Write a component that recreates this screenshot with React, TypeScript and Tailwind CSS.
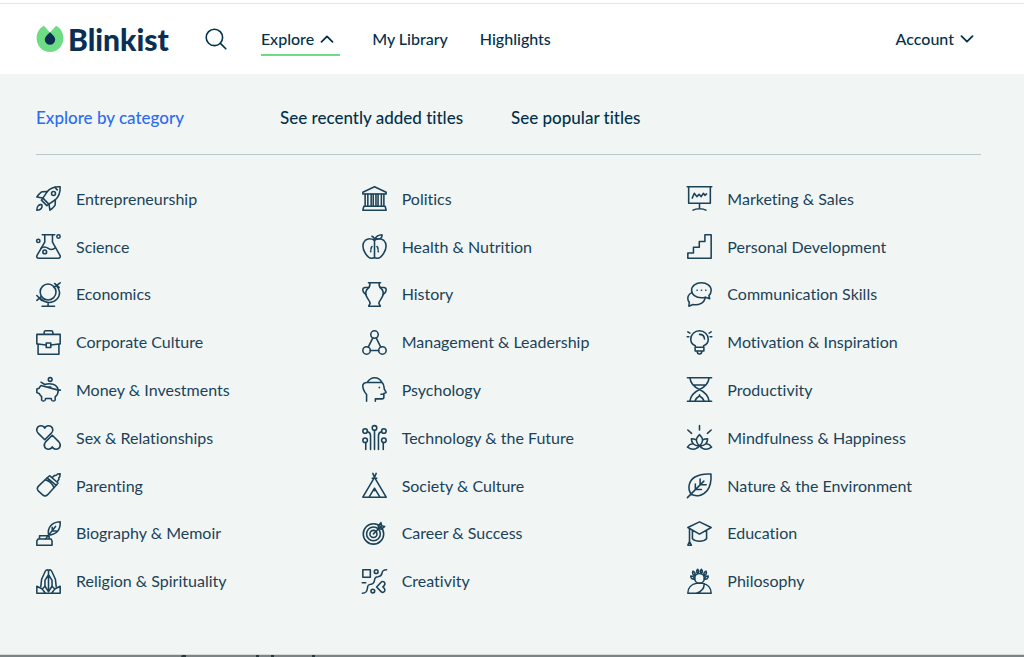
import React from "react";

interface Category {
  label: string;
  icon: React.ReactNode;
}

// Icons share a 24px box and inherit stroke settings from <CategoryIcon />
const categories: Category[] = [
  {
    label: "Entrepreneurship",
    icon: (
      <>
        <path d="M23.2.8C18 .6 14 1.8 10.8 5.4L6.6 11.6l5.8 5.8 6.2-4.2C22.2 10 23.4 6 23.2.8Z" />
        <circle cx="16.8" cy="7.2" r="1.9" />
        <path d="M10.8 5.4 6 5.6C4 6.2 2.4 8.4.8 10.6l5.8 1M18.6 13.2l-.2 4.8c-.6 2-2.8 3.6-5 5.2l-1-5.8" />
        <path d="m6.6 11.6-1.4 2 5.2 5.2 2-1.4M18 1.200c1 .4 1.200 1.600 2.400 2.600" />
        <path d="M5.600 18C3 17.400.6 19.600.8 23.200 4.400 23.400 6.600 20.800 5.600 18Z" />
      </>
    ),
  },
  {
    label: "Politics",
    icon: (
      <>
        <path d="M12 .8 23.200 6v1.600H.8V6ZM1.800 19.400h20.400l1 3.800H.8Z" />
        <path d="M3 7.600v11.800M5.600 7.600v11.800M8.800 7.600v11.800M10.800 7.600v11.800M13.400 7.600v11.800M15.400 7.600v11.800M18.600 7.600v11.800M21 7.600v11.800" />
      </>
    ),
  },
  {
    label: "Marketing & Sales",
    icon: (
      <>
        <path d="M.2.800h23.600M1.600.800v15.800h20.800V.800M12 16.600v5.200M5.800 23.200c1.600-1 3.800-1.400 6.200-1.400s4.600.4 6.200 1.400" />
        <path d="M5 11.600 7 7l2.400 3.200 2.200-2.200 2 2.200L15.800 7l1.400 2 1.600-1.400" />
      </>
    ),
  },
  {
    label: "Science",
    icon: (
      <>
        <path d="M6 .800h12M8.400.800v7L1 20.600c-.8 1.400 0 2.600 1.600 2.600h18.800c1.600 0 2.400-1.200 1.600-2.600L15.800 7.800v-7" />
        <path d="M4.800 13.800c2.400-2.200 4.600-1.600 7 0s4.800 1.200 6.800-.6" />
        <circle cx="2.200" cy="6.600" r="1.600" />
        <circle cx="21.600" cy="2.400" r="1.600" />
        <circle cx="8.400" cy="17.200" r="1.800" />
      </>
    ),
  },
  {
    label: "Health & Nutrition",
    icon: (
      <>
        <path d="M12 6C9 4.200 5.400 4.200 3 6.200c-3 2.800-2.600 8 0 12C5 21.800 7.400 23.600 10 23.200c.8-.2 1.200-.4 2-.4s1.200.2 2 .4c2.600.4 5-1.400 7-5 2.600-4 3-9.200 0-12-2.400-2-6-2-9-.2Z" />
        <path d="M9.600 2.200C11 2.800 12 4 12 6v16.800M12.800 4.400c1-2.600 3.400-3.400 6.400-3.600.4 2.800-2 5-6.400 3.600ZM9.600 12c-.8.800-1 1.600-1 2.600M8.400 16.200v.8M14.400 12c.8.800 1 1.600 1 2.600M15.600 16.200v.8" />
      </>
    ),
  },
  {
    label: "Personal Development",
    icon: <path d="M.800 23.200v-5h5.400v-5.400h5.600V7.200h5.400V.800h6v22.400Z" />,
  },
  {
    label: "Economics",
    icon: (
      <>
        <circle cx="11.600" cy="9.600" r="7.600" />
        <path d="M19.400 3.200c4 4 4.400 9.600.6 13.400-4 4-10.600 4.200-15.400-.4M23.200.800l-6 4.400M17.800 1.400l4.400 3.800M.800 13l4.600 4.600M5.200 13.800.800 17.600M11.600 19.600v3.600M5.800 23.200h12" />
      </>
    ),
  },
  {
    label: "History",
    icon: (
      <>
        <path d="M6.200.800h11.600M7.600.800c0 3 .2 4.200-2 5.600-1.800 1.600-2.400 4-1.600 6.600.8 3 3.800 5 3.800 7.600L6.400 23.200h11.200l-1.400-2.600c0-2.600 3-4.600 3.800-7.600.8-2.600.2-5-1.600-6.600-2.200-1.400-2-2.600-2-5.600" />
        <path d="M6.600 5.200H3.200C1.400 5.200.600 6.600.800 8c.2 1.800 1.400 3.200 3.200 4.200M17.400 5.200h3.400c1.800 0 2.600 1.400 2.400 2.800-.2 1.800-1.400 3.200-3.200 4.200" />
      </>
    ),
  },
  {
    label: "Communication Skills",
    icon: (
      <>
        <path d="M13.800.800c5.200 0 9.400 3 9.400 7.200 0 2.200-.8 3.800-2.200 5l.8 3-4.200-1.400c-1.200.4-2.400.6-3.800.6-5.200 0-9.400-3-9.400-7.200S8.600.800 13.800.800Z" />
        <path d="M4.600 10.200C2 11.600.600 13.600.800 16c0 1.400.6 2.400 1.400 3.400l-.4 3.800 4-1.600c5 1 10.800-1 11.600-6.600" />
        <path d="M9.600 8h.2M13.800 8h.2M18 8h.2" />
      </>
    ),
  },
  {
    label: "Corporate Culture",
    icon: (
      <>
        <path d="M7.800 4.200V2.400C7.800 1.400 8.400.800 9.400.800h5.200c1 0 1.600.600 1.600 1.600v1.800M.800 4.200h22.400v9.200H22v9.800H2v-9.800H.800ZM2 13.400l7.600 1M22 13.400l-7.600 1" />
        <rect x="9.800" y="12.400" width="4.400" height="4.400" />
      </>
    ),
  },
  {
    label: "Management & Leadership",
    icon: (
      <>
        <circle cx="12" cy="4.400" r="3.600" />
        <circle cx="4.400" cy="19.600" r="3.600" />
        <circle cx="19.600" cy="19.600" r="3.600" />
        <path d="M10.400 7.600 6 16.400M13.600 7.600l4.400 8.800M8 19.600h8" />
      </>
    ),
  },
  {
    label: "Motivation & Inspiration",
    icon: (
      <>
        <path d="M8 16.600v-1.400C5.400 14 3.600 11.600 3.600 8.800 3.600 4.400 7.400.800 12 .800s8.400 3.600 8.400 8c0 2.800-1.800 5.200-4.400 6.400v1.400ZM7.800 16.600h8.400v3.600H7.800ZM9.800 20.400c0 3.600 4.400 3.600 4.400 0" />
        <path d="M12 4.200c2.600 0 4.600 1.800 4.800 4.400M.800 1.800 2.800 3M23.200 1.800 21.200 3M.200 6.400h1.600M23.800 6.400h-1.600" />
      </>
    ),
  },
  {
    label: "Money & Investments",
    icon: (
      <>
        <circle cx="13.600" cy="2.400" r="1.800" />
        <path d="m4.800 5 3.600 2.200c4.600-1.600 12-.8 13 5.400h2M21.400 12.600c0 2.600-1 4.800-3 6.400v3.200c-.4 1.200-3 1.200-3.400 0l-.4-1.600H9.200l-.4 1.600c-.4 1.200-3 1.200-3.400 0v-3.400c-1.200-.8-1.800-1.800-2.400-3L.800 15v-3.400l2.200-.8c.4-1 1-2 1.800-2.600ZM10.400 9.600h3.800" />
      </>
    ),
  },
  {
    label: "Psychology",
    icon: (
      <path d="M4.400 23.200v-6.400C2 14 .400 10.600.800 7.600 1.400 6 2.800 5.200 4.400 5.200h14.800c2.200 1.800 2 4.600 2.200 6.400l1.800 3.200-2.200 1v3.400c0 1.200-.6 1.800-1.800 1.800h-6.400v2.200M5 5C7.200 2 9 .800 12 .800S17.400 2 19 5M18.200 16.600h2.600M16.600 9.800v.4" />
    ),
  },
  {
    label: "Productivity",
    icon: (
      <path d="M.4.800h23.200M.4 23.200h23.200M2.800.800c.6 5.600 3.800 8.600 9.200 11.200 5.400-2.600 8.600-5.600 9.200-11.200M2.800 23.200C3.400 17.600 6.600 14.600 12 12c5.400 2.600 8.600 5.600 9.200 11.200M6 7.600h12M12 17v1M7.600 23c.8-2.400 2.400-3.600 4.400-5 2 1.400 3.600 2.600 4.400 5" />
    ),
  },
  {
    label: "Sex & Relationships",
    icon: (
      <>
        <path d="M8.400 14.200 2 7.800C-.8 4.400 1.400.800 4.800.800c1.600 0 3 .8 3.600 2.200.6-1.400 2-2.200 3.600-2.200 3.400 0 5.600 3.600 2.800 7Z" />
        <path d="M15.600 9.800 22 16.200c2.800 3.400.6 7-2.800 7-1.600 0-3-.8-3.600-2.200-.6 1.400-2 2.200-3.600 2.200-3.400 0-5.600-3.600-2.800-7Z" />
      </>
    ),
  },
  {
    label: "Technology & the Future",
    icon: (
      <>
        <circle cx="12" cy="2.800" r="2.200" />
        <circle cx="3" cy="5.800" r="2.200" />
        <circle cx="21" cy="5.800" r="2.200" />
        <circle cx="3" cy="14.600" r="2.200" />
        <circle cx="21" cy="14.600" r="2.200" />
        <path d="M12 5v18.600M3.600 16.800v6.800M20.400 16.800v6.800M5.200 6.400c2 .4 3 1.600 3 4v13.200M18.800 6.400c-2 .4-3 1.600-3 4v13.200" />
      </>
    ),
  },
  {
    label: "Mindfulness & Happiness",
    icon: (
      <>
        <path d="M12 .400v4.400M.800 4.800 4.400 8M23.200 4.800 19.600 8M12 9.200c-4 3.600-4 7.200 0 10.800 4-3.600 4-7.200 0-10.800ZM8.800 14.200c-1.600-.8-2.800-1-4.600-1 0 4.200 2.600 7 7.800 6.800 5.200.2 7.800-2.600 7.800-6.800-1.800 0-3 .2-4.600 1" />
        <path d="M5.400 18C3.200 18.200 1.600 19.400.400 21.200c4 2.800 8.400 2.600 11.600-1.200 3.200 3.800 7.600 4 11.600 1.200-1.200-1.800-2.800-3-5-3.200" />
      </>
    ),
  },
  {
    label: "Parenting",
    icon: (
      <>
        <path d="M10.800 4.600 2.400 12.600C1 14.200 1 16 2.400 17.400l4 3.600c1.600 1.400 3.400 1.200 4.800-.2l8.200-9" />
        <path d="m13 2.600 8.200 7-1.800 2.200-8.600-7.200ZM9 6.600c3 .4 7 3.800 8.200 7.400M15.200 4.400 18 2.200c1.200.4 2-.2 2.600-1.200l2.600-.2-.4 2.800c-1 .6-1.200 1.400-.8 2.400l-1.800 2.600" />
      </>
    ),
  },
  {
    label: "Society & Culture",
    icon: (
      <path d="M10.400.400 12 4.200l1.600-3.800M12 4.200.800 23.200h22.400ZM9.800 5h4.400M6.800 23.200 12 14.600l5.200 8.600M12 14.600v2.400" />
    ),
  },
  {
    label: "Nature & the Environment",
    icon: (
      <path d="M.4 23.600 16.200 7.800M3.800 20.200C.200 14.600 1.800 7.200 7.600 3.800 12 1.400 18.200.600 23 1c.4 5.400-.4 11.600-3.600 15.800-3.800 5-10.600 6.400-15.600 3.400ZM12.600 5.800v5.400h5.800M8 10.600v5.200h5.800" />
    ),
  },
  {
    label: "Biography & Memoir",
    icon: (
      <path d="M2 17.200h12.400l1 2v4H.800v-4ZM3.400 17.200v-3h9.200v3M9 17.400 18.800 5.200M12 13.600C10.800 6 15 1.200 23.200.800 23.600 8 20 12.800 12 13.600ZM15.600 6v3.600h4" />
    ),
  },
  {
    label: "Career & Success",
    icon: (
      <>
        <circle cx="11" cy="12.400" r="9.800" />
        <circle cx="11" cy="12.400" r="6.600" />
        <circle cx="11" cy="12.400" r="3.400" />
        <path d="m11 12.400 7.600-7.600M15.600 4.600l2.600-3 .6 3 3 .6-3 2.600-3-.4Z" />
      </>
    ),
  },
  {
    label: "Education",
    icon: (
      <path d="M12 .800 23.200 6.200 12 12.600.800 6.200ZM5.200 9v8c3 3.200 10.600 3.200 13.600 0V9M2.400 7.200v12.600M2.400 19.800.800 23.200h3.400Z" />
    ),
  },
  {
    label: "Religion & Spirituality",
    icon: (
      <>
        <path d="M12 1.400C10.600.400 9.600.800 8.800 2.400L5.400 9.800 4.600 17M12 1.400c1.400-1 2.400-.6 3.200 1l3.400 7.400.8 7.200M12 1.400V21M12 5.400 8.600 11v5.600M12 5.400l3.400 5.600v5.600" />
        <path d="M.800 16.600v6.600h22.400v-6.600L18 19.200l-2.600-2.600-3.400 5-3.400-5L6 19.200ZM6 19.200l3 4M18 19.200l-3 4" />
      </>
    ),
  },
  {
    label: "Creativity",
    icon: (
      <>
        <rect x=".8" y=".8" width="7.200" height="7.200" />
        <circle cx="13.600" cy="2.600" r="1.800" />
        <circle cx="10.400" cy="21.200" r="1.800" />
        <path d="M23.600.800c-3.600 0-4 1.200-4.400 3.200-.4 2.400-1.200 3.200-3.800 3.400-2.600 0-3.200 1.200-3.400 3.400-.4 2.800-1.200 3.600-3.400 3.800-2.600.2-3.200 1-3.400 3.800-.4 3.200-1.200 4.800-4.800 4.800M.200 13.200H3.600" />
        <path d="m14 17.200 4.800-5c1.600-.8 3.400.8 3.200 2.200-.2 1.200-1 2-2 2.800 1 .8 1.800 1.600 2 2.800.2 1.600-1.600 3-3.200 2.200Z" />
      </>
    ),
  },
  {
    label: "Philosophy",
    icon: (
      <>
        <circle cx="12" cy="9" r="4.600" />
        <path d="M.800 23.200c0-5.200 3.600-8.800 8.400-9.600h5.600c4.800.8 8.400 4.400 8.400 9.600ZM16.600 14.200c-.2 4.800-3 8-7.800 9" />
        <path d="M7.400 9.800C5 10.200 3.600 9 3.600 6.800c2 0 3.400 1 3.800 3ZM7.600 6.400C5.400 5.600 4.800 3.800 5.800 2c1.800 1 2.400 2.600 1.800 4.400ZM10.200 4.400C8.800 3 9 1.400 10.200.400c1.200 1.200 1.200 2.600 0 4ZM13.800 4.400c-1.200-1.400-1.200-2.800 0-4 1.200 1 1.400 2.600 0 4ZM16.400 6.400c-.6-1.800 0-3.400 1.800-4.400 1 1.800.4 3.600-1.800 4.400ZM16.600 9.800c.4-2 1.800-3 3.800-3 0 2.200-1.400 3.400-3.800 3Z" />
      </>
    ),
  },
];

const CategoryIcon: React.FC<{ children: React.ReactNode }> = ({ children }) => (
  <svg
    viewBox="0 0 24 24"
    className="size-[25px] shrink-0 overflow-visible"
    fill="none"
    stroke="currentColor"
    strokeWidth="1.5"
    strokeLinecap="round"
    strokeLinejoin="round"
    aria-hidden="true"
  >
    {children}
  </svg>
);

const Chevron: React.FC<{ up?: boolean }> = ({ up }) => (
  <svg
    viewBox="0 0 14 8"
    className="h-2 w-3.5"
    fill="none"
    stroke="currentColor"
    strokeWidth="1.8"
    strokeLinecap="round"
    strokeLinejoin="round"
    aria-hidden="true"
  >
    <path d={up ? "M1.500 6.800 7 1.400l5.500 5.400" : "M1.500 1.200 7 6.600l5.500-5.400"} />
  </svg>
);

const Logo: React.FC = () => (
  <a href="#" className="flex items-center gap-1 text-[#0b2f52]">
    <svg viewBox="0 0 28 28" className="size-7" aria-hidden="true">
      <path
        fill="#6ddc85"
        d="M8 .8C3.400 3 .6 7.800.6 13c0 8 6 14 13.400 14s13.400-6 13.400-14c0-5.200-2.800-10-7.400-12.200L14 7.400Z"
      />
      <path
        fill="currentColor"
        d="M14 7.200c3 2.800 5.200 4.800 5.200 7.400a5.200 5.200 0 0 1-10.400 0c0-2.600 2.200-4.600 5.200-7.400Z"
      />
    </svg>
    <span className="text-[30px] leading-8 font-black">Blinkist</span>
  </a>
);

const Header: React.FC = () => (
  <header className="mt-[3px] flex h-[71px] items-center border-t border-[#e4e7e8] bg-white pr-[50px] pl-9 text-base font-medium">
    <Logo />
    <button type="button" aria-label="Search" className="ml-9">
      <svg
        viewBox="0 0 22 22"
        className="size-[22px]"
        fill="none"
        stroke="currentColor"
        strokeWidth="1.6"
        strokeLinecap="round"
        aria-hidden="true"
      >
        <circle cx="9.400" cy="9.400" r="8.200" />
        <path d="m15.400 15.400 5.400 5.400" />
      </svg>
    </button>
    <nav className="ml-[34px] flex items-center gap-8">
      <button
        type="button"
        aria-expanded="true"
        className="mt-0.5 flex h-8 items-center gap-1.5 border-b-2 border-[#6ddc85] pr-1.5"
      >
        Explore
        <Chevron up />
      </button>
      <a href="#">My Library</a>
      <a href="#">Highlights</a>
    </nav>
    <button type="button" className="ml-auto flex items-center gap-1.5">
      Account
      <Chevron />
    </button>
  </header>
);

export default function App() {
  return (
    <div className="font-['Lato',sans-serif] text-[#03314b] [font-variant-ligatures:none]">
      <Header />

      <div className="bg-[#f1f6f4] pt-8 pr-[43px] pb-[49px] pl-9">
        <nav className="flex items-center border-b border-[#bac8ce] pb-6 text-[17px] leading-6 font-medium">
          <a href="#" className="mr-24 text-[#2c6cf0]">
            Explore by category
          </a>
          <a href="#" className="mr-12">
            See recently added titles
          </a>
          <a href="#">See popular titles</a>
        </nav>

        <ul className="mt-5 grid min-h-[430px] auto-rows-fr grid-cols-3 gap-x-8 text-base text-[#1b4259]">
          {categories.map(({ label, icon }) => (
            <li key={label} className="flex items-center">
              <a href="#" className="flex items-center gap-[15px] whitespace-nowrap">
                <CategoryIcon>{icon}</CategoryIcon>
                {label}
              </a>
            </li>
          ))}
        </ul>
      </div>

      {/* Dimmed page showing under the open menu */}
      <div className="h-[3px] border-t border-[#d5dada] bg-[#7b8587] pl-[181px]">
        <svg viewBox="0 0 136 2" className="h-0.5 w-[136px]" fill="#22393f" aria-hidden="true">
          <path d="M1 0h4v2H0ZM75 0h3v2h-3ZM90 0h3v2h-3ZM131 0h3v2h-3Z" />
        </svg>
      </div>
    </div>
  );
}
